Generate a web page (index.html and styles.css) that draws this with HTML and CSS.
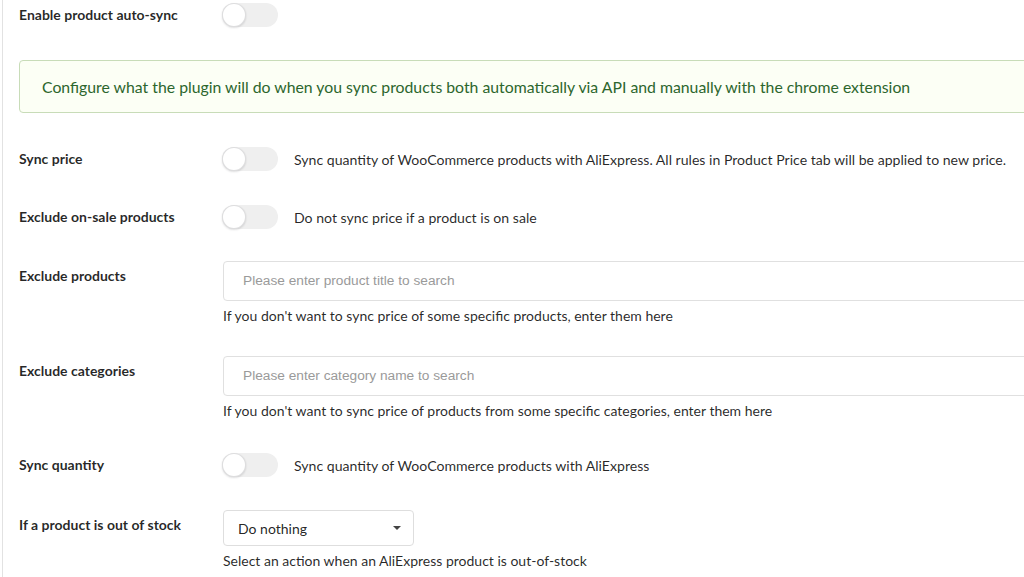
FILE: index.html
```html
<!DOCTYPE html>
<html>
<head>
<meta charset="utf-8">
<link rel="stylesheet" href="styles.css">
</head>
<body>
<div class="page">
  <div class="row row-toggle first">
    <div class="label">Enable product auto-sync</div>
    <div class="control inline"><span class="toggle"><span class="knob"></span></span></div>
  </div>

  <div class="message">Configure what the plugin will do when you sync products both automatically via API and manually with the chrome extension</div>

  <div class="row row-toggle">
    <div class="label">Sync price</div>
    <div class="control inline"><span class="toggle"><span class="knob"></span></span><span class="desc">Sync quantity of WooCommerce products with AliExpress. All rules in Product Price tab will be applied to new price.</span></div>
  </div>

  <div class="row row-toggle before-field">
    <div class="label">Exclude on-sale products</div>
    <div class="control inline"><span class="toggle"><span class="knob"></span></span><span class="desc">Do not sync price if a product is on sale</span></div>
  </div>

  <div class="row row-field">
    <div class="label">Exclude products</div>
    <div class="control">
      <div class="search">Please enter product title to search</div>
      <div class="help">If you don't want to sync price of some specific products, enter them here</div>
    </div>
  </div>

  <div class="row row-field before-toggle">
    <div class="label">Exclude categories</div>
    <div class="control">
      <div class="search">Please enter category name to search</div>
      <div class="help">If you don't want to sync price of products from some specific categories, enter them here</div>
    </div>
  </div>

  <div class="row row-toggle before-select">
    <div class="label">Sync quantity</div>
    <div class="control inline"><span class="toggle"><span class="knob"></span></span><span class="desc">Sync quantity of WooCommerce products with AliExpress</span></div>
  </div>

  <div class="row row-field">
    <div class="label">If a product is out of stock</div>
    <div class="control">
      <div class="select"><span>Do nothing</span><span class="caret"></span></div>
      <div class="help">Select an action when an AliExpress product is out-of-stock</div>
    </div>
  </div>
</div>
</body>
</html>
```

FILE: styles.css
```css
html, body {
  margin: 0;
  padding: 0;
  background: #fff;
  overflow: hidden;
}
body {
  font-family: Lato, "Open Sans", sans-serif;
  color: rgba(0,0,0,0.87);
  font-size: 14px;
}
.page {
  margin-left: 2px;
  border-left: 1px solid #e2e2e2;
  padding: 3px 0 20px 16px;
  width: 1100px;
  min-height: 600px;
}
.row {
  display: flex;
  align-items: flex-start;
}
.label {
  width: 203px;
  flex: none;
  font-weight: 700;
  font-size: 14px;
  line-height: 20px;
  color: rgba(0,0,0,0.85);
}
.row-toggle .label { padding-top: 2px; }
.row-field .label { padding-top: 5px; }
.row-toggle { margin-bottom: 34px; }
.row-toggle.first { margin-bottom: 33px; }
.row-toggle.before-field { margin-bottom: 32px; }
.row-toggle.before-select { margin-bottom: 33px; }
.row-field { margin-bottom: 30px; }
.row-field.before-toggle { margin-bottom: 32px; }
.control { flex: 1; }
.control.inline {
  display: flex;
  align-items: center;
}
.toggle {
  display: block;
  position: relative;
  width: 56px;
  height: 24px;
  border-radius: 12px;
  background: #efefef;
  flex: none;
}
.knob {
  position: absolute;
  left: 0;
  top: 0;
  width: 24px;
  height: 24px;
  border-radius: 50%;
  background: #fff;
  box-shadow: 0 1px 2px 0 rgba(34,36,38,0.15), 0 0 0 1px rgba(34,36,38,0.15) inset;
}
.desc {
  margin-left: 16px;
  font-size: 14.1px;
  color: rgba(0,0,0,0.85);
  white-space: nowrap;
}
.message {
  margin-bottom: 34px;
  box-sizing: border-box;
  height: 53px;
  border: 1px solid #c8dcb8;
  border-radius: 4px;
  background: #fcfff5;
  color: #2c662d;
  font-size: 15.8px;
  line-height: 51px;
  padding-left: 22px;
  white-space: nowrap;
}
.search {
  margin-left: 1px;
  height: 40px;
  box-sizing: border-box;
  border: 1px solid #e0e0e0;
  border-radius: 4px;
  padding-left: 19px;
  line-height: 38px;
  font-family: "Liberation Sans", Arial, sans-serif;
  font-size: 13.7px;
  color: #9a9a9a;
}
.help {
  margin-left: 1px;
  margin-top: 5px;
  font-size: 14px;
  line-height: 20px;
  color: rgba(0,0,0,0.85);
}
.select {
  margin-left: 1px;
  width: 191px;
  height: 36px;
  box-sizing: border-box;
  border: 1px solid #dedede;
  border-radius: 4px;
  display: flex;
  align-items: center;
  justify-content: space-between;
  padding: 0 12px 0 14px;
  font-size: 14px;
}
.caret {
  width: 0;
  height: 0;
  border-left: 4px solid transparent;
  border-right: 4px solid transparent;
  border-top: 4px solid #444;
}
```
